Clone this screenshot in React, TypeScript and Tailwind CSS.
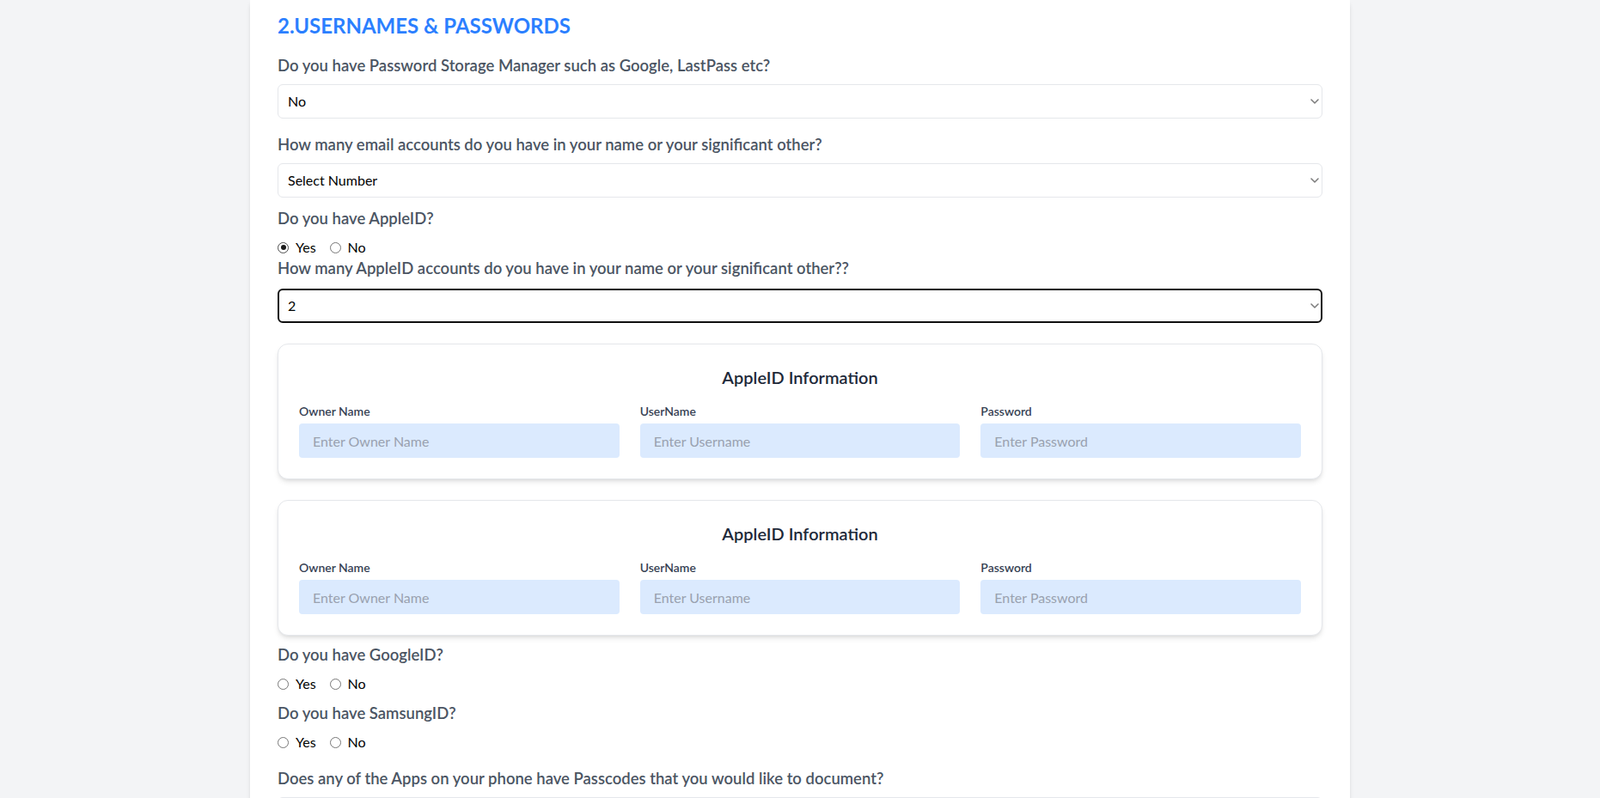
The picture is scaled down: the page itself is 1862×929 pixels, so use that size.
const fieldLabel = 'block text-[18.5px] leading-7 font-semibold text-[#4b5563]';
const selectBase = 'w-full h-10 pr-8 rounded-md bg-white text-base text-black appearance-none';

function Chevron() {
  return (
    <svg
      className="absolute right-[4px] top-1/2 -translate-y-1/2 pointer-events-none"
      width="10"
      height="6"
      viewBox="0 0 10 6"
      fill="none"
    >
      <path d="M1 1 L5 5 L9 1" stroke="#7a7a7a" strokeWidth="1.5" strokeLinecap="round" strokeLinejoin="round" />
    </svg>
  );
}

function Select({ value, options, focused }: { value: string; options: string[]; focused?: boolean }) {
  return (
    <div className="relative">
      <select
        defaultValue={value}
        className={`${selectBase} ${focused ? 'border-2 border-[#101010] pl-[10px]' : 'border border-gray-200 pl-[11px]'}`}
      >
        {options.map((o) => (
          <option key={o} value={o === 'Select Number' || o === 'Select' ? '' : o}>
            {o}
          </option>
        ))}
      </select>
      <Chevron />
    </div>
  );
}

function Radio({ checked }: { checked?: boolean }) {
  return (
    <span
      className={
        checked
          ? 'w-[13px] h-[13px] rounded-full border border-[#4a4a4a] flex items-center justify-center'
          : 'w-[13px] h-[13px] rounded-full border border-[#767676] bg-white'
      }
    >
      {checked && <span className="w-[6px] h-[6px] rounded-full bg-[#1a1a1a]" />}
    </span>
  );
}

function YesNo({ value }: { value?: 'yes' | 'no' }) {
  return (
    <div className="flex items-center text-base text-black leading-6">
      <label className="flex items-center mr-4">
        <Radio checked={value === 'yes'} />
        <span className="ml-2">Yes</span>
      </label>
      <label className="flex items-center">
        <Radio checked={value === 'no'} />
        <span className="ml-2">No</span>
      </label>
    </div>
  );
}

function AppleIdCard() {
  const fields = [
    { label: 'Owner Name', placeholder: 'Enter Owner Name' },
    { label: 'UserName', placeholder: 'Enter Username' },
    { label: 'Password', placeholder: 'Enter Password' },
  ];
  return (
    <div className="border border-gray-200 rounded-xl shadow-md bg-white p-6">
      <h3 className="text-xl font-semibold text-gray-800 text-center mb-4">AppleID Information</h3>
      <div className="grid grid-cols-3 gap-6">
        {fields.map((f) => (
          <div key={f.label}>
            <label className="block text-sm font-semibold text-gray-700 mb-1">{f.label}</label>
            <input
              type={f.label === 'Password' ? 'password' : 'text'}
              placeholder={f.placeholder}
              className="w-full h-10 px-4 bg-blue-100 rounded-sm text-base placeholder:text-gray-400 outline-none"
            />
          </div>
        ))}
      </div>
    </div>
  );
}

export default function App() {
  return (
    <div className="min-h-screen bg-gray-100 font-['Segoe_UI',Lato,sans-serif]">
      <div className="max-w-7xl mx-auto bg-white shadow-md px-8 pt-[14px] pb-16 min-h-screen">
        <h2 className="text-2xl font-bold text-blue-500 mb-4">2.USERNAMES &amp; PASSWORDS</h2>

        <div className="mb-4">
          <label className={`${fieldLabel} mb-2`}>Do you have Password Storage Manager such as Google, LastPass etc?</label>
          <Select value="No" options={['Yes', 'No']} />
        </div>

        <div className="mb-[10px]">
          <label className={`${fieldLabel} mb-2`}>How many email accounts do you have in your name or your significant other?</label>
          <Select value="" options={['Select Number', '1', '2', '3']} />
        </div>

        <label className={`${fieldLabel} mb-2`}>Do you have AppleID?</label>
        <YesNo value="yes" />

        <label className={`${fieldLabel} -mt-[2px] mb-[10px]`}>
          How many AppleID accounts do you have in your name or your significant other??
        </label>
        <Select value="2" options={['1', '2', '3']} focused />

        <div className="mt-6 space-y-6">
          <AppleIdCard />
          <AppleIdCard />
        </div>

        <div className="mt-2">
          <label className={`${fieldLabel} mb-2`}>Do you have GoogleID?</label>
          <YesNo />
        </div>

        <div className="mt-2">
          <label className={`${fieldLabel} mb-2`}>Do you have SamsungID?</label>
          <YesNo />
        </div>

        <div className="mt-4">
          <label className={`${fieldLabel} mb-2`}>
            Does any of the Apps on your phone have Passcodes that you would like to document?
          </label>
          <Select value="" options={['Select', 'Yes', 'No']} />
        </div>
      </div>
    </div>
  );
}
